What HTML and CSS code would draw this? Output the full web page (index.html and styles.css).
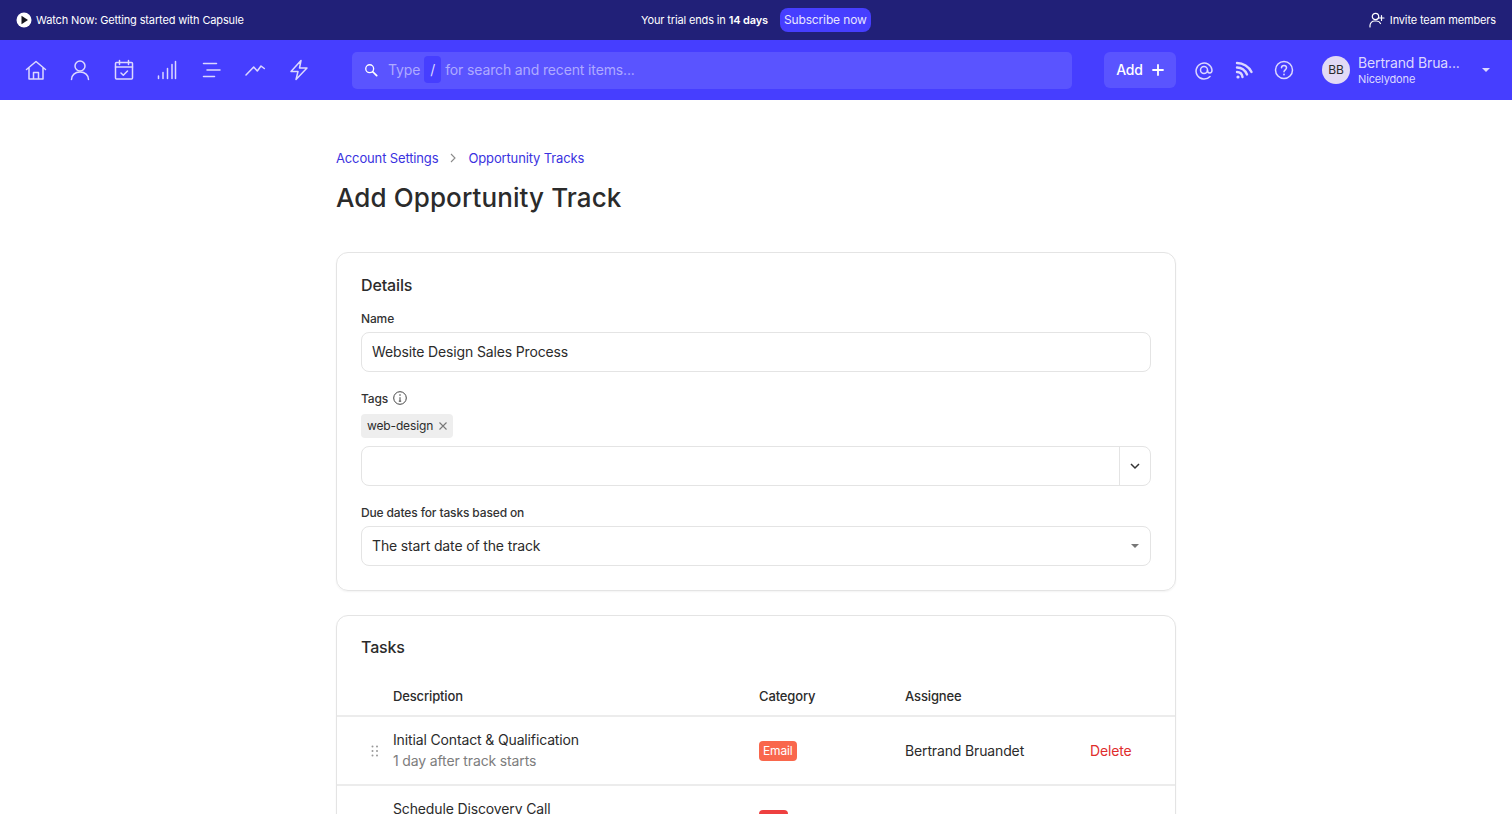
FILE: index.html
```html
<!DOCTYPE html>
<html lang="en">
<head>
  <meta charset="UTF-8" />
  <meta name="viewport" content="width=device-width, initial-scale=1.0"/>
  <title>Add Opportunity Track</title>
  <link rel="stylesheet" href="styles.css">
</head>

<body>
  <div class="topbar">
    <a class="watch" href="#">
      <svg width="16" height="16" viewBox="0 0 16 16"><circle cx="8" cy="8" r="7.500" fill="#fff"/><path d="M5.500 3.700 12 8l-6.500 4.300z" fill="#17171f"/></svg>
      Watch Now: Getting started with Capsule
    </a>
    <div class="trial">
      <span>Your trial ends in <b>14 days</b></span>
      <a class="subscribe" href="#">Subscribe now</a>
    </div>
    <a class="invite" href="#">
      <svg width="16" height="16" viewBox="0 0 16 16" fill="none" stroke="#fff" stroke-width="1.200" stroke-linecap="round"><circle cx="6.500" cy="4.500" r="3.200"/><path d="M1 15v-1.500a4.500 4.500 0 0 1 4.500-4.500h2a4.500 4.500 0 0 1 4 2.500M12.500 3.500v5M10 6h5"/></svg>
      Invite team members
    </a>
  </div>

  <header class="navbar">
    <nav class="nav-icons">
      <a href="#"><svg width="22" height="22" viewBox="0 0 22 22"><path d="M1.500 10.500 11 2.500l9.500 8M4 8.500V20h14V8.500M8.500 20v-6.500h5V20"/></svg></a>
      <a href="#"><svg width="22" height="22" viewBox="0 0 22 22"><circle cx="11" cy="7" r="5"/><path d="M2.500 20.500c0-4.500 3.500-7.500 8.500-7.500s8.500 3 8.500 7.500"/></svg></a>
      <a href="#"><svg width="22" height="22" viewBox="0 0 22 22"><rect x="2.500" y="3.500" width="17" height="16.500" rx="1"/><path d="M2.500 8h17M6.500 1.500v4M15.500 1.500v4M8 14l2.300 2.200L14.500 12"/></svg></a>
      <a href="#"><svg width="22" height="22" viewBox="0 0 22 22"><path d="M2.500 19.500v-2.500M7 19.500v-6M11.500 19.500v-10M16 19.500v-14M19.500 19.500V2.500"/></svg></a>
      <a href="#"><svg width="22" height="22" viewBox="0 0 22 22"><path d="M3.500 4.500h13M7 11h13M3.500 17.500h11"/></svg></a>
      <a href="#"><svg width="22" height="22" viewBox="0 0 22 22"><path d="M2 16l7.700-8 3.600 4L17 7l3.300 2.500"/></svg></a>
      <a href="#"><svg width="22" height="22" viewBox="0 0 22 22"><path d="M13 1.500 3 12.500h7l-2 8 11-11.500h-7.500z"/></svg></a>
    </nav>
    <div class="search">
      <svg width="14" height="14" viewBox="0 0 16 16" fill="none" stroke="#fff" stroke-width="1.500" stroke-linecap="round"><circle cx="6.500" cy="6.500" r="4.500"/><path d="m10 10 4.500 4.500" stroke-width="2"/></svg>
      <span>Type</span><kbd>/</kbd><span>for search and recent items...</span>
    </div>
    <a class="add" href="#">Add <svg width="12" height="12" viewBox="0 0 12 12"><path d="M6 1v10M1 6h10" stroke="#fff" stroke-width="1.800" stroke-linecap="round"/></svg></a>
    <div class="nav-tools">
      <a href="#"><svg width="20" height="20" viewBox="0 0 20 20"><path d="M16 16.500A8 8 0 1 1 18 10c0 2-1 3-2.300 3S13.500 12 13.500 10.500"/><circle cx="10" cy="10" r="3.500"/></svg></a>
      <a href="#"><svg width="20" height="20" viewBox="0 0 20 20"><path class="thick" d="M3 3c6 0 12 3.500 14.500 9M3 7.500c4.500 0 8 2.500 10 7M3 12c2.500 0 5 1.500 5.500 5"/><circle cx="4" cy="17" r="1.600" fill="#dcd8ff" stroke="none"/></svg></a>
      <a href="#"><svg width="20" height="20" viewBox="0 0 20 20"><circle cx="10" cy="10" r="8.500"/><path d="M7.500 7.800c0-3.200 5-3.200 5 0 0 2-2.500 2-2.500 4"/><circle cx="10" cy="14.500" r=".9" fill="#dcd8ff" stroke="none"/></svg></a>
    </div>
    <div class="user">
      <span class="avatar">BB</span>
      <div class="user-name">
        <strong>Bertrand Brua...</strong>
        <small>Nicelydone</small>
      </div>
      <span class="caret-white"></span>
    </div>
  </header>

  <main class="page">
    <div class="crumbs">
      <a href="#">Account Settings</a>
      <svg width="8" height="10" viewBox="0 0 8 10" fill="none" stroke="#8a8a8a" stroke-width="1.100"><path d="m2 1 4 4-4 4"/></svg>
      <a href="#">Opportunity Tracks</a>
    </div>
    <h1>Add Opportunity Track</h1>

    <section class="card details">
      <h2>Details</h2>
      <div class="field">
        <label>Name</label>
        <div class="input">Website Design Sales Process</div>
      </div>
      <div class="field">
        <label class="tags-label">Tags
          <svg width="14" height="14" viewBox="0 0 14 14" fill="none" stroke="#444" stroke-width="1"><circle cx="7" cy="7" r="6.300"/><path d="M7 6.200v4M5.800 10.200h2.400"/><circle cx="7" cy="4" r=".8" fill="#444" stroke="none"/></svg>
        </label>
        <span class="tag">web-design
          <svg width="8" height="8" viewBox="0 0 8 8"><path d="m.5.500 7 7M7.500.500l-7 7" stroke="#777" stroke-width="1.100"/></svg>
        </span>
        <div class="combo">
          <div class="combo-text"></div>
          <div class="combo-btn"><svg width="10" height="7" viewBox="0 0 10 7" fill="none" stroke="#333" stroke-width="1.500"><path d="m1 1 4 4 4-4"/></svg></div>
        </div>
      </div>
      <div class="field">
        <label>Due dates for tasks based on</label>
        <div class="input select">The start date of the track <span class="caret"></span></div>
      </div>
    </section>

    <section class="card tasks">
      <h2>Tasks</h2>
      <div class="row head">
        <div></div>
        <div>Description</div>
        <div>Category</div>
        <div>Assignee</div>
        <div></div>
      </div>
      <div class="row">
        <div class="grip"><svg width="8" height="12" viewBox="0 0 8 12" fill="#999"><circle cx="1.500" cy="1.500" r="1"/><circle cx="6" cy="1.500" r="1"/><circle cx="1.500" cy="6" r="1"/><circle cx="6" cy="6" r="1"/><circle cx="1.500" cy="10.500" r="1"/><circle cx="6" cy="10.500" r="1"/></svg></div>
        <div>
          <div class="task-name">Initial Contact &amp; Qualification</div>
          <div class="task-when">1 day after track starts</div>
        </div>
        <div><span class="badge email">Email</span></div>
        <div class="cell">Bertrand Bruandet</div>
        <div class="cell"><a class="delete" href="#">Delete</a></div>
      </div>
      <div class="row">
        <div class="grip"><svg width="8" height="12" viewBox="0 0 8 12" fill="#999"><circle cx="1.500" cy="1.500" r="1"/><circle cx="6" cy="1.500" r="1"/><circle cx="1.500" cy="6" r="1"/><circle cx="6" cy="6" r="1"/><circle cx="1.500" cy="10.500" r="1"/><circle cx="6" cy="10.500" r="1"/></svg></div>
        <div>
          <div class="task-name">Schedule Discovery Call</div>
          <div class="task-when">3 days after track starts</div>
        </div>
        <div><span class="badge call">Call</span></div>
        <div class="cell">Bertrand Bruandet</div>
        <div class="cell"><a class="delete" href="#">Delete</a></div>
      </div>
    </section>
  </main>
</body>
</html>
```

FILE: styles.css
```css
html, body {
  height: 100%;
  overflow: hidden;
}

body {
  margin: 0;
  font-family: 'Inter', 'Liberation Sans', sans-serif;
  letter-spacing: -0.14px;
  color: #2b2b2b;
  background: #fff;
}

a {
  text-decoration: none;
}

.topbar {
  display: flex;
  align-items: center;
  justify-content: space-between;
  height: 40px;
  padding: 0 16px;
  background: #212078;
  color: #fff;
  font-size: 11px;
  position: relative;
}

.topbar a {
  color: #fff;
}

.watch, .invite {
  display: flex;
  align-items: center;
  gap: 4px;
}

.invite {
  gap: 5px;
}

.trial {
  display: flex;
  align-items: center;
  gap: 12px;
  position: absolute;
  left: 641px;
  top: 8px;
}

.trial b {
  font-weight: 600;
}

.topbar .subscribe {
  padding: 0 4px;
  height: 24px;
  line-height: 24px;
  background: #463eff;
  border-radius: 8px;
  color: #e6e4ff;
  font-size: 12px;
}

.navbar {
  display: flex;
  align-items: center;
  height: 60px;
  background: #463eff;
}

.nav-icons {
  display: flex;
  gap: 21.800px;
  margin-left: 25px;
  width: 327px;
}

.nav-icons svg, .nav-tools svg {
  display: block;
  fill: none;
  stroke: #dcd8ff;
  stroke-width: 1.500;
  stroke-linecap: round;
  stroke-linejoin: round;
}

.nav-tools svg .thick {
  stroke-width: 2.400;
}

.search {
  display: flex;
  align-items: center;
  width: 720px;
  height: 37px;
  box-sizing: border-box;
  padding: 0 0 1px 12px;
  background: #5a54ff;
  border-radius: 5px;
  color: #aeaaff;
  font-size: 14px;
}

.search svg {
  margin-right: 10px;
}

.search kbd {
  width: 17px;
  height: 27px;
  line-height: 27px;
  margin: 0 4px;
  text-align: center;
  background: #463eff;
  border-radius: 4px;
  color: #dcd8ff;
  font-family: inherit;
  font-size: 14px;
}

.add {
  display: flex;
  align-items: center;
  justify-content: center;
  gap: 9px;
  width: 72px;
  height: 36px;
  margin-left: 32px;
  padding-bottom: 1px;
  box-sizing: border-box;
  background: #5a54ff;
  border-radius: 6px;
  color: #fff;
  font-size: 14px;
  font-weight: 500;
}

.nav-tools {
  display: flex;
  gap: 20px;
  margin-left: 18px;
}

.user {
  display: flex;
  align-items: center;
  margin-left: 28px;
  color: #dcd8ff;
}

.avatar {
  width: 28px;
  height: 28px;
  line-height: 28px;
  text-align: center;
  border-radius: 50%;
  background: #e2daf5;
  color: #2b2b2b;
  font-size: 12px;
}

.user-name {
  width: 120px;
  margin-left: 8px;
}

.user-name strong {
  display: block;
  font-size: 14px;
  font-weight: 400;
  line-height: 17px;
}

.user-name small {
  display: block;
  font-size: 11px;
  line-height: 16px;
}

.caret-white {
  margin-left: 4px;
  border: 4px solid transparent;
  border-top: 4px solid #dcd8ff;
  border-bottom: 0;
}

.page {
  width: 840px;
  margin: 0 auto;
}

.crumbs {
  display: flex;
  align-items: center;
  gap: 11px;
  padding-top: 49px;
  line-height: 18px;
  font-size: 13px;
}

.crumbs a {
  color: #3a32e0;
}

h1 {
  margin: 13px 0 0;
  font-size: 26px;
  line-height: 36px;
  font-weight: 500;
  letter-spacing: 0.1px;
}

.card {
  margin-bottom: 24px;
  border: 1px solid #e4e4e4;
  border-radius: 12px;
  box-shadow: 0 1px 2px rgba(0, 0, 0, 0.05);
}

.details {
  margin-top: 36px;
  padding: 23px 24px;
  height: 339px;
  box-sizing: border-box;
}

.card h2 {
  margin: 0;
  font-size: 16px;
  line-height: 18px;
  font-weight: 500;
}

.field {
  margin-top: 18px;
}

.details h2 + .field {
  margin-top: 16px;
}

.field label {
  display: flex;
  align-items: center;
  gap: 5px;
  height: 16px;
  margin-bottom: 6px;
  font-size: 12px;
  font-weight: 500;
  color: #333;
}

.field .tags-label {
  margin-bottom: 8px;
}

.input {
  height: 40px;
  box-sizing: border-box;
  padding: 0 10px;
  line-height: 38px;
  border: 1px solid #e4e4e4;
  border-radius: 8px;
  font-size: 14px;
  position: relative;
}

.tag {
  display: inline-flex;
  align-items: center;
  gap: 6px;
  height: 24px;
  padding: 0 6px 1px;
  box-sizing: border-box;
  background: #eeeeee;
  border-radius: 4px;
  font-size: 12px;
  vertical-align: top;
}

.combo {
  display: flex;
  height: 40px;
  box-sizing: border-box;
  margin-top: 8px;
  border: 1px solid #e4e4e4;
  border-radius: 8px;
}

.combo-text {
  flex: 1;
}

.combo-btn {
  display: flex;
  align-items: center;
  justify-content: center;
  width: 30px;
  border-left: 1px solid #e4e4e4;
}

.caret {
  position: absolute;
  right: 11px;
  top: 17px;
  border: 4px solid transparent;
  border-top: 4px solid #777;
  border-bottom: 0;
}

.tasks h2 {
  padding: 22px 24px 0;
}

.row {
  display: grid;
  grid-template-columns: 56px 366px 146px 185px 1fr;
  align-items: center;
  height: 67px;
  border-top: 2px solid #ececec;
  font-size: 14px;
}

.row.head {
  height: 38px;
  margin-top: 21px;
  border-top: 0;
  font-size: 13px;
  font-weight: 500;
}

.cell {
  padding-bottom: 1px;
}

.grip {
  display: flex;
  justify-content: flex-end;
  padding-right: 14px;
}

.grip svg {
  display: block;
}

.task-name {
  line-height: 20px;
}

.task-when {
  line-height: 22px;
  color: #7d7d7d;
}

.badge {
  display: inline-block;
  height: 20px;
  line-height: 20px;
  padding: 0 4px;
  border-radius: 4px;
  color: #fff;
  font-size: 12px;
}

.email {
  background: #f9674c;
}

.call {
  background: #ee4040;
}

.delete {
  color: #e02d2d;
}
```
